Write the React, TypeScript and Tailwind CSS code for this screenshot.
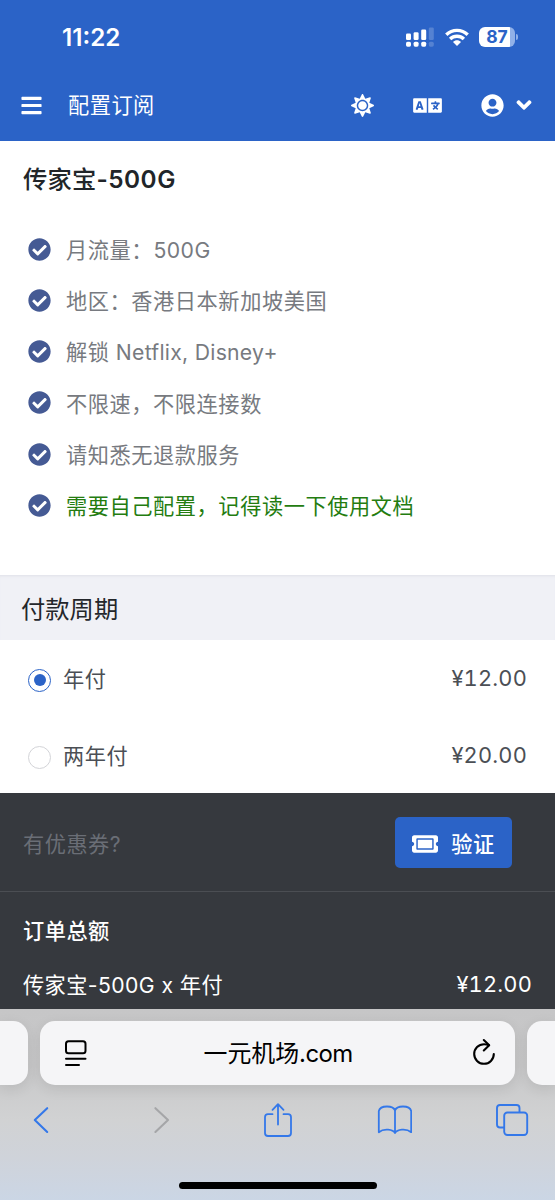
import type { ReactNode } from 'react';
import { FaAngleDown, FaBars, FaCheckCircle, FaLanguage, FaSun, FaTicketAlt, FaUserCircle } from 'react-icons/fa';

const features: { label: ReactNode; highlight?: boolean }[] = [
  { label: <>月流量：<span className="ml-[0.5px] tracking-[0.4px]">500G</span></> },
  { label: '地区：香港日本新加坡美国' },
  { label: <>解锁<span className="tracking-[0.27px]"> Netflix, Disney+</span></> },
  { label: '不限速，不限连接数' },
  { label: '请知悉无退款服务' },
  { label: '需要自己配置，记得读一下使用文档', highlight: true },
];

const periods = [
  { name: '年付', price: '¥12.00', selected: true },
  { name: '两年付', price: '¥20.00', selected: false },
];

function StatusBar() {
  return (
    <div className="flex h-[70px] items-center justify-between pt-[4px] pr-[37px] pl-[62px]">
      <span className="pt-[2px] text-[24.2px] leading-none font-semibold">11:22</span>
      <div className="flex items-center gap-[10px]">
        <svg width="29" height="20" viewBox="0 0 29 20" fill="currentColor">
          <rect x="0" y="6.5" width="5" height="6.5" rx="1.3" />
          <rect x="7.6" y="5.3" width="5" height="7.7" rx="1.3" />
          <rect x="15.2" y="2.5" width="5" height="10.5" rx="1.3" />
          <rect x="22.8" y="0.5" width="5" height="12.5" rx="1.3" opacity="0.2" />
          <rect x="0" y="14.7" width="5" height="5" rx="1.6" />
          <rect x="7.6" y="14.7" width="5" height="5" rx="1.6" />
          <rect x="15.2" y="14.7" width="5" height="5" rx="1.6" />
          <rect x="22.8" y="14.7" width="5" height="5" rx="1.6" opacity="0.2" />
        </svg>
        <svg width="24" height="19" viewBox="0 0 24 19" fill="none" stroke="currentColor" strokeWidth="3.4">
          <path d="M1.3 6.7C7.3 .9 16.7 .9 22.7 6.7" />
          <path d="M5.1 11C9 7.4 15 7.4 18.9 11" />
          <path d="M8 14C10.2 11.8 13.8 11.8 16 14L12 18Z" fill="currentColor" stroke="none" />
        </svg>
        <div className="flex items-center gap-px">
          <div className="flex h-[20px] w-[36px] items-center justify-center rounded-[6px] bg-[linear-gradient(to_right,#fff_87%,#91b1e8_87%)] text-[17.5px] leading-none font-bold text-[#2b63c7]">
            87
          </div>
          <div className="h-[6px] w-[2px] rounded-r-full bg-[#91b1e8]" />
        </div>
      </div>
    </div>
  );
}

function NavBar() {
  return (
    <div className="flex h-[70px] items-center pr-[19px] pl-[20px]">
      <FaBars className="h-[23px] w-[23px]" />
      <span className="ml-[25px] flex-1 pt-[2px] text-[21.2px] leading-none tracking-[0.5px]">配置订阅</span>
      <FaSun className="h-[23px] w-[23px]" />
      <FaLanguage className="ml-[39px] h-[23px] w-[29px]" />
      <FaUserCircle className="ml-[39px] h-[23px] w-[23px]" />
      <FaAngleDown className="ml-[8px] h-[24px] w-[24px]" />
    </div>
  );
}

function Plan() {
  return (
    <section className="h-[434px] px-[23px]">
      <h1 className="flex h-[77px] items-center text-[24.3px] leading-none font-medium tracking-[0.2px] text-[#212529]">
        传家宝<span className="font-semibold tracking-[0.5px]">-500G</span>
      </h1>
      <ul className="pt-[5.4px]">
        {features.map((f, i) => (
          <li key={i} className="flex h-[51.25px] items-center pl-[5px]">
            <FaCheckCircle className="h-[23px] w-[23px] text-[#455a94]" />
            <span
              className={
                f.highlight
                  ? 'ml-[15px] pt-[3px] text-[21.2px] leading-none tracking-[0.58px] whitespace-pre text-[#247c10]'
                  : 'ml-[15px] pt-[3px] text-[21.2px] leading-none tracking-[0.58px] whitespace-pre text-[#777a80]'
              }
            >
              {f.label}
            </span>
          </li>
        ))}
      </ul>
    </section>
  );
}

function Periods() {
  return (
    <section>
      <h2 className="flex h-[65px] items-center bg-[#f0f1f6] px-[21px] pt-[4px] text-[24.3px] leading-none text-[#24272b] shadow-[inset_0_3px_3px_-2px_#dfe1e8]">
        付款周期
      </h2>
      {periods.map((p) => (
        <label key={p.name} className="flex h-[76.7px] items-center pr-[28px] pl-[28px] text-[21.2px] leading-none text-[#4b4f55]">
          <span
            className={
              p.selected
                ? 'mt-[4px] flex size-[23px] items-center justify-center rounded-full border-[1.5px] border-[#2b63c7]'
                : 'mt-[4px] flex size-[23px] items-center justify-center rounded-full border-[1.5px] border-[#d3d4d8]'
            }
          >
            {p.selected && <span className="size-[12px] rounded-full bg-[#2b63c7]" />}
          </span>
          <span className="ml-[12px] flex-1 pt-[3px] tracking-[0.5px]">{p.name}</span>
          <span className="pt-[2px] text-[21.8px] tracking-[0.2px] tabular-nums">{p.price}</span>
        </label>
      ))}
    </section>
  );
}

function Order() {
  return (
    <section className="h-[216px] bg-[#36393e] text-[21.2px] leading-none text-white">
      <div className="flex h-[99px] items-center border-b border-[#4b4e53] pt-[1px] pr-[43px] pl-[23px]">
        <span className="flex-1 pt-[3px] tracking-[0.5px] text-[#6a6e76]">有优惠券?</span>
        <button className="flex h-[51px] w-[117px] items-center justify-center gap-[13px] rounded-[5px] bg-[#2b63c7] font-medium tracking-[0.5px]">
          <FaTicketAlt className="mt-[2px] h-[26px] w-[26px]" />
          <span className="pt-[3px]">验证</span>
        </button>
      </div>
      <h3 className="flex h-[77px] items-center pt-[2px] pl-[23px] font-medium tracking-[0.5px]">订单总额</h3>
      <div className="flex h-[32px] items-center justify-between pr-[23px] pl-[23px]">
        <span className="tracking-[0.42px]">传家宝-500G x 年付</span>
        <span className="text-[21.8px] tracking-[0.2px] tabular-nums">¥12.00</span>
      </div>
    </section>
  );
}

function BrowserBar() {
  return (
    <footer className="h-[191px] bg-[linear-gradient(to_bottom,#c6c6c7_0%,#c8c8c9_30%,#d1d2d3_58%,#cfd3da_78%,#cbd6e5_100%)] pt-[12px]">
      <div className="flex h-[64px] justify-between">
        <div className="w-[28px] rounded-r-[15px] bg-[#f5f5f7] shadow-[0_4px_14px_rgba(0,0,0,0.09)]" />
        <div className="flex w-[475px] items-center justify-between rounded-[15px] bg-[#f5f5f7] pr-[18px] pl-[24px] text-black shadow-[0_4px_14px_rgba(0,0,0,0.09)]">
          <svg width="24" height="28" viewBox="0 0 24 28" fill="none" stroke="currentColor" strokeWidth="2" strokeLinecap="round">
            <rect x="2" y="2.2" width="19.5" height="12" rx="2.5" />
            <path d="M2 19.7H21.5M2 26H15" />
          </svg>
          <span className="pt-[2px] pr-[3px] text-[23.9px] leading-none">
            一元机场<span className="tracking-[-0.6px]">.com</span>
          </span>
          <svg width="26" height="30" viewBox="0 0 26 30" fill="none" stroke="currentColor" strokeWidth="2.1" strokeLinecap="round" strokeLinejoin="round">
            <path d="M22.8 16A9.8 9.8 0 1 1 13 6.2C14.8 6.2 16.5 6.6 18 7.2" />
            <path d="M12.8 2L18.2 7.2L12.8 12.5" />
          </svg>
        </div>
        <div className="w-[28px] rounded-l-[15px] bg-[#f5f5f7] shadow-[0_4px_14px_rgba(0,0,0,0.09)]" />
      </div>
      <div className="flex h-[70px] items-center justify-between pr-[25px] pl-[23px] text-[#3478e9]">
        <svg width="36" height="28" viewBox="-9 0 36 28" fill="none" stroke="currentColor" strokeWidth="2.1" strokeLinecap="round" strokeLinejoin="round">
          <path d="M15.2 2.2L2.8 14L15.2 26" />
        </svg>
        <svg className="text-[#a5a6a8]" width="36" height="28" viewBox="-12 0 36 28" fill="none" stroke="currentColor" strokeWidth="2.1" strokeLinecap="round" strokeLinejoin="round">
          <path d="M2.4 2.2L15 14L2.4 26" />
        </svg>
        <svg width="36" height="36" viewBox="-4 0 36 36" fill="none" stroke="currentColor" strokeWidth="1.8" strokeLinecap="round" strokeLinejoin="round">
          <path d="M9.5 12.2H5Q2 12.2 2 15.2V31Q2 34 5 34H25Q28 34 28 31V15.2Q28 12.2 25 12.2H20.5" />
          <path d="M15 22.5V2.5M9.5 7.8L15 2.2L20.5 7.8" />
        </svg>
        <svg width="36" height="30" viewBox="-1 0 36 30" fill="none" stroke="currentColor" strokeWidth="1.8" strokeLinejoin="round">
          <path d="M18 28C16 24.5 7 23 1.8 27.2V6C2.5 3 6 1.5 10 1.5C14 1.5 17.2 3 18 5.5C18.8 3 22 1.5 26 1.5C30 1.5 33.5 3 34.2 6V27.2C29 23 20 24.5 18 28ZM18 5.5V28" />
        </svg>
        <svg width="36" height="32" viewBox="-1.5 0 36 32" fill="none" stroke="currentColor" strokeWidth="1.9" strokeLinejoin="round">
          <path d="M8.5 23.5H4.5Q1.5 23.5 1.5 20.5V4Q1.5 1 4.5 1H21Q24 1 24 4V8.5" />
          <rect x="8.7" y="8.5" width="23" height="22.5" rx="3.2" />
        </svg>
      </div>
      <div className="mx-auto mt-[27px] h-[7px] w-[198px] rounded-full bg-black" />
    </footer>
  );
}

export default function App() {
  return (
    <main className="h-[1200px] w-[555px] overflow-hidden bg-white font-['Inter','Noto_Sans_CJK_SC',sans-serif]">
      <header className="h-[141px] bg-[#2b63c7] text-white">
        <StatusBar />
        <NavBar />
      </header>
      <Plan />
      <Periods />
      <Order />
      <BrowserBar />
    </main>
  );
}
